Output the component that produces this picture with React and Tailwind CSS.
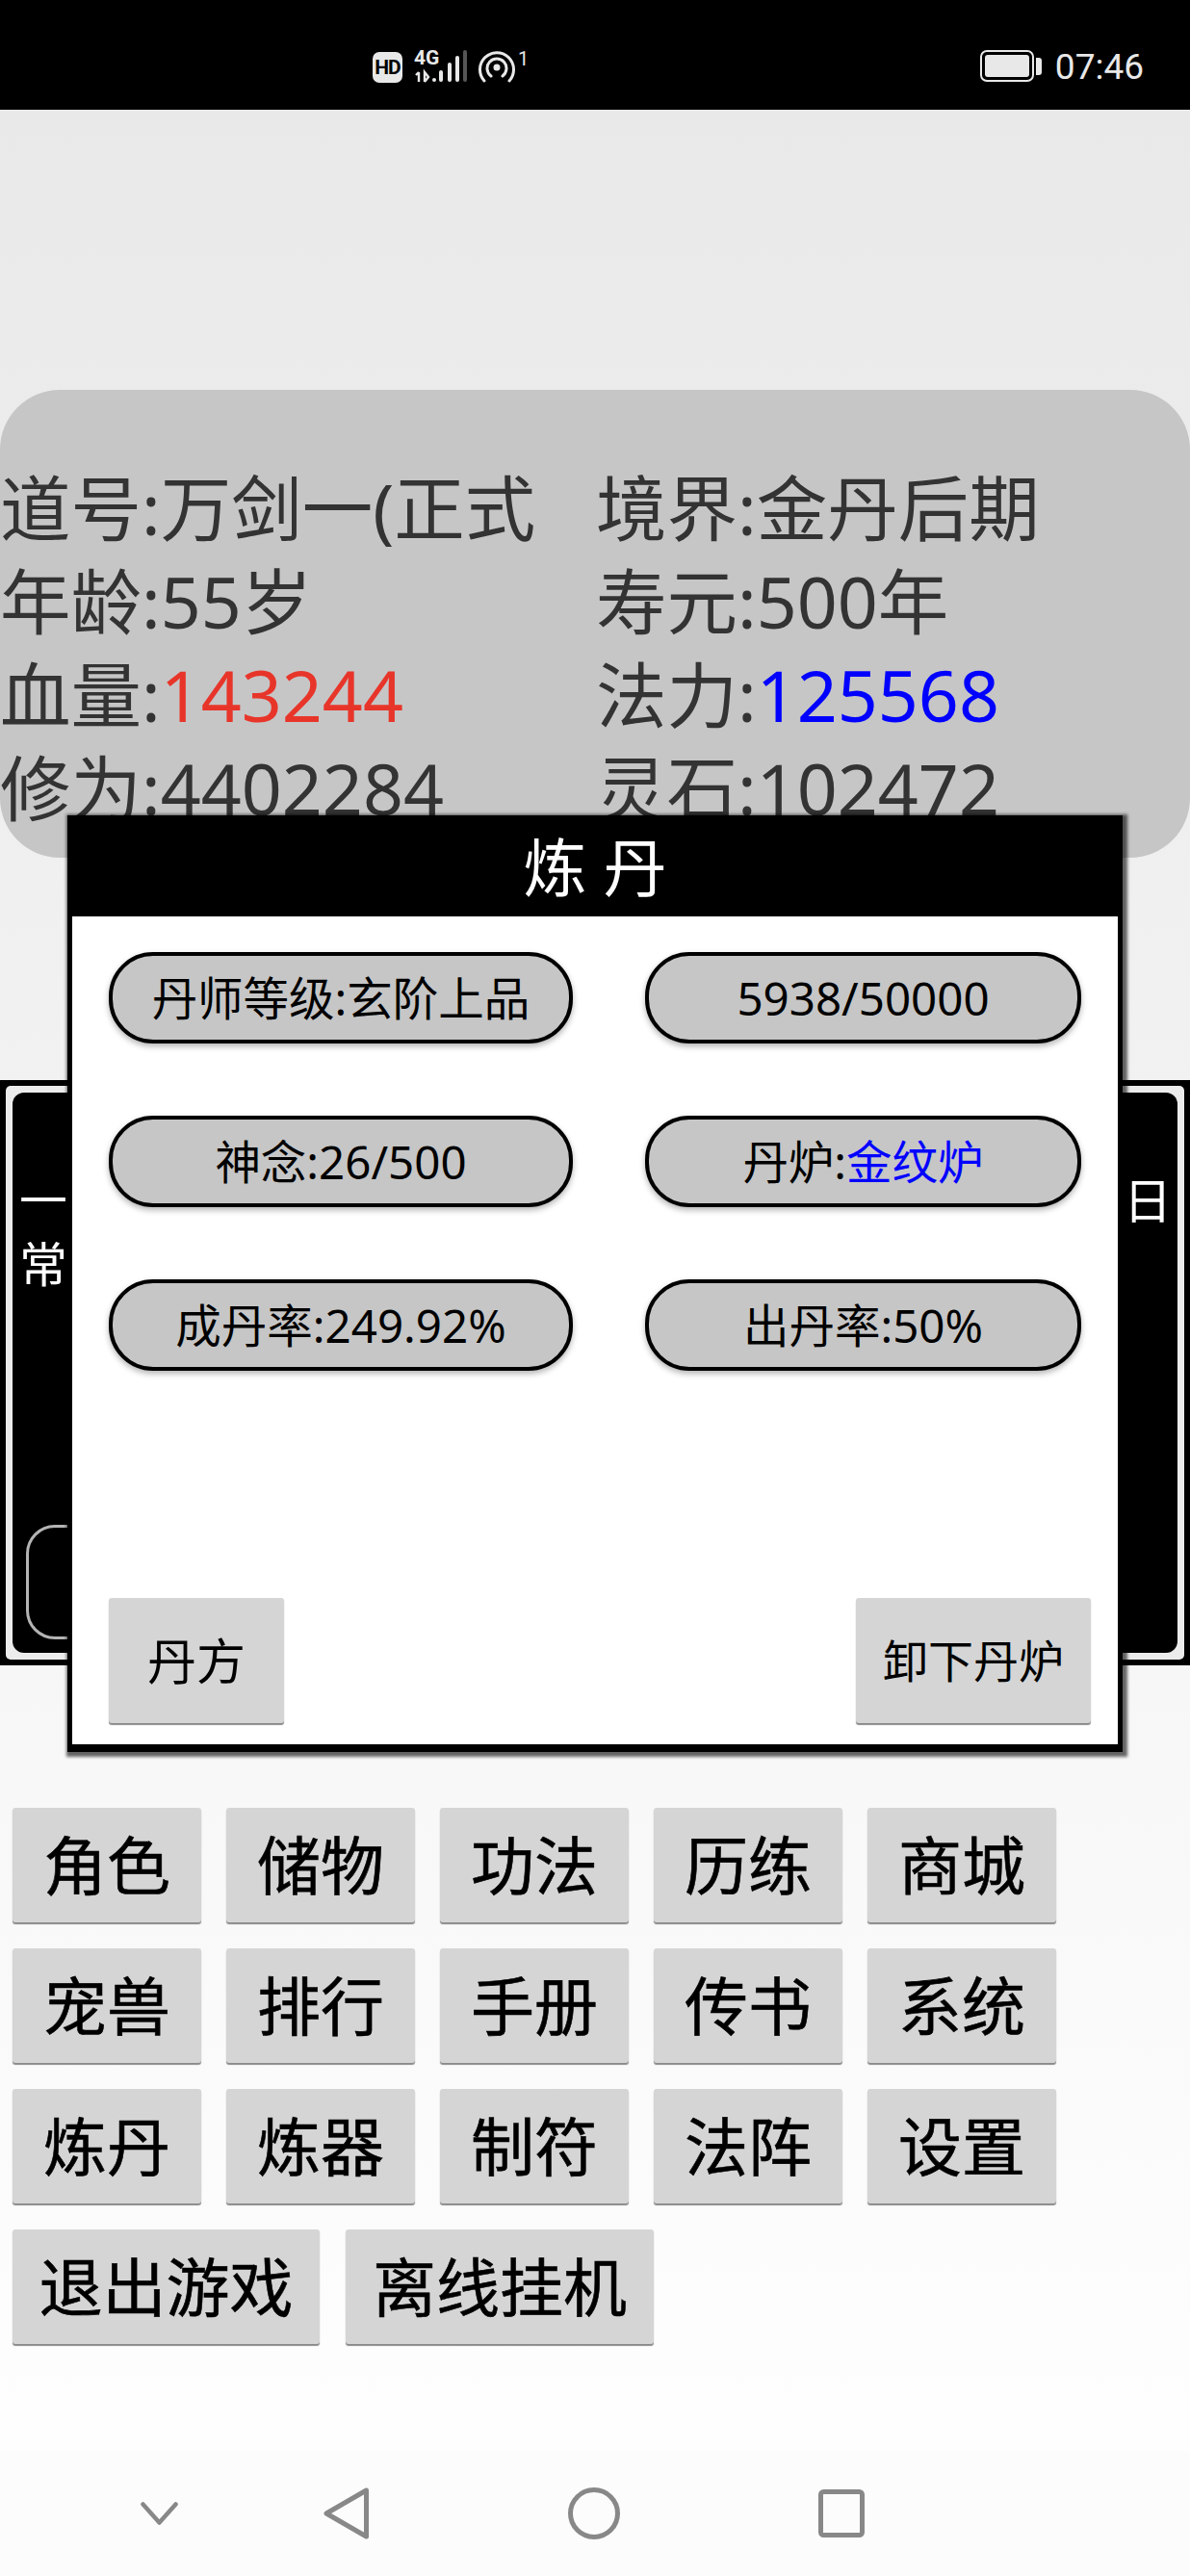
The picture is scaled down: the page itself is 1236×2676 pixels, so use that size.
import React from "react";

const statRows = [
  [
    { label: "道号:", value: "万剑一(正式" },
    { label: "境界:", value: "金丹后期" },
  ],
  [
    { label: "年龄:", value: "55岁" },
    { label: "寿元:", value: "500年" },
  ],
  [
    { label: "血量:", value: "143244", color: "text-[#e8352a]" },
    { label: "法力:", value: "125568", color: "text-[#0000ff]" },
  ],
  [
    { label: "修为:", value: "4402284" },
    { label: "灵石:", value: "102472" },
  ],
];

const menuRows = [
  ["角色", "储物", "功法", "历练", "商城"],
  ["宠兽", "排行", "手册", "传书", "系统"],
  ["炼丹", "炼器", "制符", "法阵", "设置"],
];

const Pill = ({ children }) => (
  <div className="h-[95px] flex items-center justify-center rounded-[46px] border-[4px] border-black bg-[#c6c6c6] text-[47.5px] leading-none text-black shadow-[0_3px_6px_rgba(0,0,0,0.3)]">
    <span>{children}</span>
  </div>
);

const GrayButton = ({ className, children }) => (
  <button className={`flex items-center justify-center rounded-[3px] bg-[#d5d5d5] text-black shadow-[0_2px_1px_#8a8a8a] ${className}`}>
    {children}
  </button>
);

const StatusBar = () => (
  <div className="h-[114px] bg-black flex items-start pt-[52px] pl-[387px] pr-[48px] text-[#e8e8e8]">
    <div className="w-[31px] h-[32px] mt-[2px] rounded-[7px] bg-[#e8e8e8] text-black text-[21px] font-bold leading-[32px] text-center font-['Roboto',sans-serif] tracking-tighter">
      HD
    </div>
    <div className="relative ml-[12px] w-[58px] h-[34px] shrink-0">
      <span className="absolute left-0 top-[-2px] text-[21px] leading-[20px] font-bold font-['Roboto',sans-serif]">4G</span>
      <svg width="58" height="34" viewBox="0 0 58 34" fill="#e8e8e8">
        <path d="M5 23v10M2 26l3-3M11 33V23l4 5-4 5" stroke="#e8e8e8" strokeWidth="2.4" fill="none" />
        <rect x="19" y="29" width="4" height="4" rx="2" />
        <rect x="26" y="21" width="4" height="12" rx="2" />
        <rect x="35" y="13" width="4" height="20" rx="2" />
        <rect x="43" y="6" width="4" height="27" rx="2" />
        <rect x="51" y="0" width="4" height="33" rx="2" fill="#555" />
      </svg>
    </div>
    <svg className="ml-[9px] shrink-0" width="38" height="36" viewBox="0 0 38 36" fill="none" stroke="#e8e8e8">
      <circle cx="19" cy="18" r="3.5" fill="#e8e8e8" stroke="none" />
      <path d="M13 27a10 10 0 1 1 12 0" strokeWidth="3" strokeLinecap="round" />
      <path d="M6 32a17.5 17.5 0 1 1 26 0" strokeWidth="3" strokeLinecap="round" />
    </svg>
    <span className="ml-[3px] text-[20px] leading-[18px] font-['Roboto',sans-serif]">1</span>
    <div className="ml-auto flex items-start">
      <div className="w-[56px] h-[33px] rounded-[7px] border-[2px] border-[#e8e8e8] p-[3px]">
        <div className="w-full h-full rounded-[3px] bg-[#e8e8e8]" />
      </div>
      <div className="ml-[2px] mt-[8px] w-[6px] h-[18px] rounded-r-[3px] bg-[#e8e8e8]" />
      <span className="ml-[14px] text-[37px] leading-[36px] font-['Roboto',sans-serif] text-[#e8e8e8]">07:46</span>
    </div>
  </div>
);

const NavBar = () => (
  <div className="mt-auto h-[130px] bg-[#fcfcfc] flex items-center pl-[146px]">
    <svg width="39" height="24" viewBox="0 0 39 24" fill="none" stroke="#888" strokeWidth="4.5" strokeLinecap="round" strokeLinejoin="round">
      <path d="M2.5 2.5l17 19 17-19" />
    </svg>
    <svg className="ml-[151px]" width="47" height="54" viewBox="0 0 47 54" fill="none" stroke="#888" strokeWidth="5" strokeLinejoin="round">
      <path d="M44.5 3v48L3 27z" />
    </svg>
    <svg className="ml-[207px]" width="54" height="54" viewBox="0 0 54 54" fill="none" stroke="#888" strokeWidth="5">
      <circle cx="27" cy="27" r="24.5" />
    </svg>
    <svg className="ml-[206px]" width="48" height="50" viewBox="0 0 48 50" fill="none" stroke="#888" strokeWidth="5">
      <rect x="2.5" y="2.5" width="43" height="45" rx="3" />
    </svg>
  </div>
);

// 炼丹 dialog, sits over the page
const AlchemyDialog = () => (
  <div className="absolute left-[70px] top-[847px] w-[1096px] h-[973px] flex flex-col bg-black px-[5px] pb-[8px] shadow-[2px_2px_3px_3px_rgba(0,0,0,0.6)]">
    <div className="h-[105px] shrink-0 flex items-center justify-center text-white text-[66px] leading-none">
      炼 丹
    </div>
    <div className="flex-1 bg-white flex flex-col pt-[37px] pb-[22px] pl-[38px] pr-[28px]">
      <div className="grid grid-cols-[482px_453px] gap-x-[75px] gap-y-[75px]">
        <Pill>丹师等级:玄阶上品</Pill>
        <Pill>5938/50000</Pill>
        <Pill>神念:26/500</Pill>
        <Pill>
          丹炉:<span className="text-[#0000ff]">金纹炉</span>
        </Pill>
        <Pill>成丹率:249.92%</Pill>
        <Pill>出丹率:50%</Pill>
      </div>
      <div className="mt-auto flex justify-between">
        <GrayButton className="w-[182px] h-[130px] text-[51px]">丹方</GrayButton>
        <GrayButton className="w-[244px] h-[130px] text-[47px]">卸下丹炉</GrayButton>
      </div>
    </div>
  </div>
);

export default function App() {
  return (
    <div className="relative w-[1236px] h-[2676px] flex flex-col overflow-hidden bg-linear-to-b from-[#e8e8e8] to-white font-['Noto_Sans','Noto_Sans_CJK_SC',sans-serif]">
      <StatusBar />

      <div className="mt-[291px] h-[486px] rounded-[62px] bg-[#c6c6c6] pt-[74px] text-[73.5px] leading-[97px] text-[#333]">
        {statRows.map((row) => (
          <div key={row[0].label} className="grid grid-cols-[619px_1fr]">
            {row.map((cell) => (
              <div key={cell.label} className="whitespace-nowrap">
                {cell.label}
                <span className={cell.color}>{cell.value}</span>
              </div>
            ))}
          </div>
        ))}
      </div>

      <div className="mt-[231px] h-[608px] bg-black p-[6px]">
        <div className="h-full rounded-[5px] bg-[#ececec] p-[7px]">
          <div className="h-full rounded-[12px] bg-black flex flex-col pt-[79px] pb-[14px] text-white text-[50px] leading-[66px]">
            <div className="flex justify-between pl-[7px] pr-[6px]">
              <div>
                <div>一</div>
                <div>常</div>
              </div>
              <div>日</div>
            </div>
            <div className="mt-auto ml-[14px] w-[220px] h-[119px] rounded-[30px] border-[3px] border-[#b4b4b4]" />
          </div>
        </div>
      </div>

      <div className="mt-[148px] ml-[13px] flex flex-col gap-[27px] [-webkit-text-stroke:0.6px_black]">
        {menuRows.map((row) => (
          <div key={row[0]} className="flex gap-[26px]">
            {row.map((item) => (
              <GrayButton key={item} className="w-[196px] h-[119px] text-[66px]">
                {item}
              </GrayButton>
            ))}
          </div>
        ))}
        <div className="flex gap-[27px]">
          <GrayButton className="w-[319px] h-[119px] text-[66px]">退出游戏</GrayButton>
          <GrayButton className="w-[320px] h-[119px] text-[66px]">离线挂机</GrayButton>
        </div>
      </div>

      <NavBar />
      <AlchemyDialog />
    </div>
  );
}
